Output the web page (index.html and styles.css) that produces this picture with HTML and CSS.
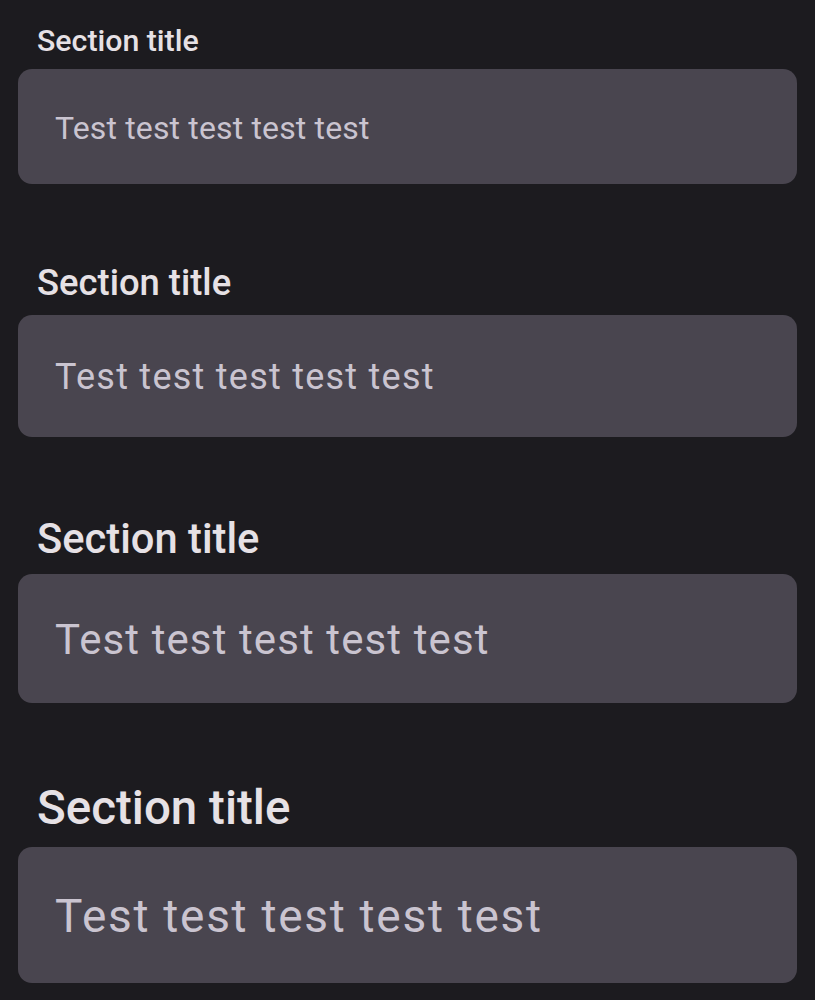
FILE: index.html
```html
<!DOCTYPE html>
<html lang="en">
<head>
<meta charset="utf-8">
<title>Sections</title>
<link rel="stylesheet" href="styles.css">
</head>
<body>
<main class="page">
  <section class="section s1">
    <h2 class="title">Section title</h2>
    <div class="card"><p class="text">Test test test test test</p></div>
  </section>
  <section class="section s2">
    <h2 class="title">Section title</h2>
    <div class="card"><p class="text">Test test test test test</p></div>
  </section>
  <section class="section s3">
    <h2 class="title">Section title</h2>
    <div class="card"><p class="text">Test test test test test</p></div>
  </section>
  <section class="section s4">
    <h2 class="title">Section title</h2>
    <div class="card"><p class="text">Test test test test test</p></div>
  </section>
</main>
</body>
</html>
```
FILE: styles.css
```css
html, body {
  margin: 0;
  padding: 0;
  background: #1c1b1f;
}
body {
  font-family: Roboto, "Noto Sans", "Liberation Sans", sans-serif;
}
.page {
  display: flex;
  flex-direction: column;
  gap: 77px;
  padding: 23px 18px 0;
}
.section {
  display: flex;
  flex-direction: column;
  gap: 10px;
}
.title {
  margin: 0 0 0 19px;
  font-weight: 500;
  line-height: 1.2;
  color: #e6e1e5;
}
.card {
  background: #49454f;
  border-radius: 14px;
  padding: 32px 37px 29px;
}
.text {
  margin: 0;
  color: #cac4d0;
  font-weight: 400;
}
.s1 .title { font-size: 30.3px; }
.s2 .title { font-size: 36.4px; }
.s3 .title { font-size: 41.7px; }
.s4 .title { font-size: 47.5px; }
.s1 .text { font-size: 32px; line-height: 54px; letter-spacing: 0.15px; }
.s2 .text { font-size: 36px; line-height: 61px; letter-spacing: 1.25px; }
.s3 .text { font-size: 42px; line-height: 68px; letter-spacing: 1.1px; }
.s4 .text { font-size: 46px; line-height: 75px; letter-spacing: 1.7px; }
```
